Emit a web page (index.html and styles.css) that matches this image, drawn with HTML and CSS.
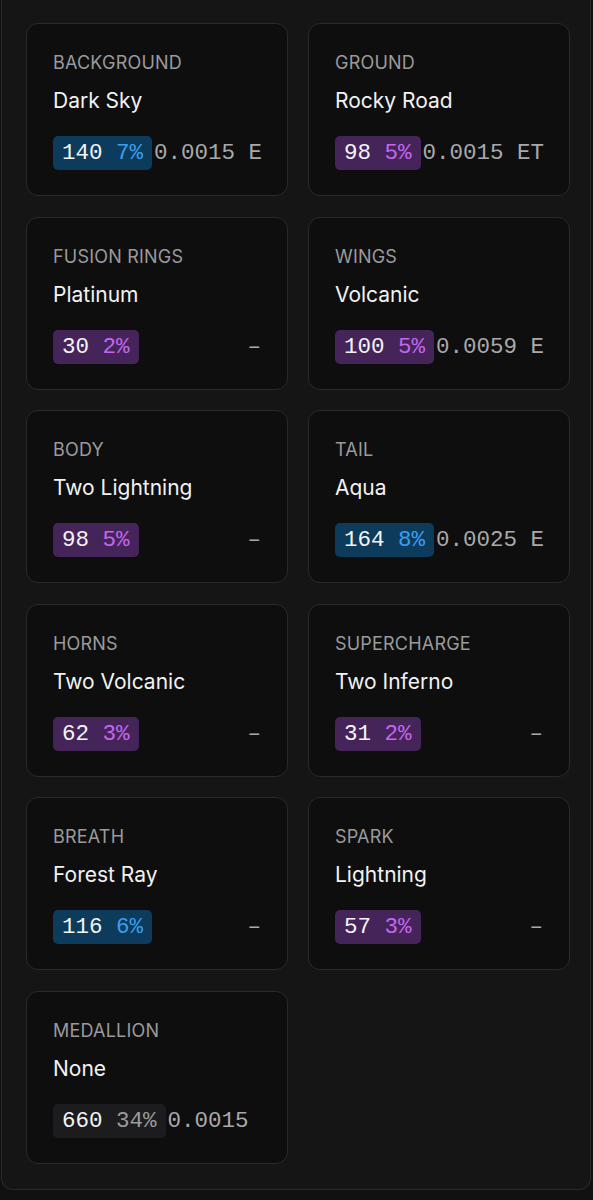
FILE: index.html
```html
<!DOCTYPE html>
<html>
<head>
<meta charset="utf-8">
<link rel="stylesheet" href="styles.css">
</head>
<body>
<div class="panel">
  <div class="grid">
    <div class="card">
      <div class="label">BACKGROUND</div>
      <div class="name">Dark Sky</div>
      <div class="row"><span class="badge blue"><span class="num">140</span> <span class="pct">7%</span></span><span class="val">0.0015 E</span></div>
    </div>
    <div class="card">
      <div class="label">GROUND</div>
      <div class="name">Rocky Road</div>
      <div class="row"><span class="badge purple"><span class="num">98</span> <span class="pct">5%</span></span><span class="val">0.0015 ET</span></div>
    </div>
    <div class="card">
      <div class="label">FUSION RINGS</div>
      <div class="name">Platinum</div>
      <div class="row"><span class="badge purple"><span class="num">30</span> <span class="pct">2%</span></span><span class="val dash">–</span></div>
    </div>
    <div class="card">
      <div class="label">WINGS</div>
      <div class="name">Volcanic</div>
      <div class="row"><span class="badge purple"><span class="num">100</span> <span class="pct">5%</span></span><span class="val">0.0059 E</span></div>
    </div>
    <div class="card">
      <div class="label">BODY</div>
      <div class="name">Two Lightning</div>
      <div class="row"><span class="badge purple"><span class="num">98</span> <span class="pct">5%</span></span><span class="val dash">–</span></div>
    </div>
    <div class="card">
      <div class="label">TAIL</div>
      <div class="name">Aqua</div>
      <div class="row"><span class="badge blue"><span class="num">164</span> <span class="pct">8%</span></span><span class="val">0.0025 E</span></div>
    </div>
    <div class="card">
      <div class="label">HORNS</div>
      <div class="name">Two Volcanic</div>
      <div class="row"><span class="badge purple"><span class="num">62</span> <span class="pct">3%</span></span><span class="val dash">–</span></div>
    </div>
    <div class="card">
      <div class="label">SUPERCHARGE</div>
      <div class="name">Two Inferno</div>
      <div class="row"><span class="badge purple"><span class="num">31</span> <span class="pct">2%</span></span><span class="val dash">–</span></div>
    </div>
    <div class="card">
      <div class="label">BREATH</div>
      <div class="name">Forest Ray</div>
      <div class="row"><span class="badge blue"><span class="num">116</span> <span class="pct">6%</span></span><span class="val dash">–</span></div>
    </div>
    <div class="card">
      <div class="label">SPARK</div>
      <div class="name">Lightning</div>
      <div class="row"><span class="badge purple"><span class="num">57</span> <span class="pct">3%</span></span><span class="val dash">–</span></div>
    </div>
    <div class="card">
      <div class="label">MEDALLION</div>
      <div class="name">None</div>
      <div class="row"><span class="badge gray"><span class="num">660</span> <span class="pct">34%</span></span><span class="val">0.0015</span></div>
    </div>
  </div>
</div>
</body>
</html>
```

FILE: styles.css
```css
html, body {
  margin: 0;
  padding: 0;
  background: #111112;
}
body {
  font-family: Inter, "Noto Sans", sans-serif;
  height: 1200px;
  overflow: hidden;
}
.panel {
  margin: 0 2px 0 1px;
  background: #151516;
  border: 1px solid #2a2a2e;
  border-top: 0;
  border-radius: 0 0 12px 12px;
  padding: 23px 20px 25px 24px;
}
.grid {
  display: grid;
  grid-template-columns: 1fr 1fr;
  column-gap: 20px;
  row-gap: 20.6px;
}
.card {
  background: #0e0e0f;
  border: 1px solid #2a2a2e;
  border-radius: 12px;
  padding: 27px 26px 25px 26px;
  min-width: 0;
}
.label {
  font-size: 18px;
  line-height: 24px;
  color: #9a9a9c;
  letter-spacing: 0.2px;
}
.name {
  margin-top: 12px;
  font-size: 21px;
  line-height: 28px;
  color: #f2f2f2;
}
.row {
  margin-top: 21px;
  display: flex;
  align-items: center;
  gap: 2px;
  font-family: "Liberation Mono", "DejaVu Sans Mono", monospace;
  font-size: 22.5px;
  height: 34px;
}
.badge {
  flex: none;
  height: 34px;
  line-height: 34px;
  padding: 0 9px;
  border-radius: 5px;
  white-space: pre;
}
.badge .num { color: #f4f4f4; }
.blue { background: #0c3b5b; }
.blue .pct { color: #3b9ff0; }
.purple { background: #45245a; }
.purple .pct { color: #c466ee; }
.gray { background: #1c1c1e; }
.gray .pct { color: #9a9a9c; }
.val {
  white-space: pre;
  color: #a9a9ab;
}
.dash {
  margin-left: auto;
}
```
